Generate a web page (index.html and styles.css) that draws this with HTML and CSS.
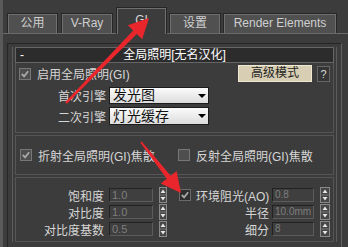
FILE: index.html
```html
<!DOCTYPE html>
<html>
<head>
<meta charset="utf-8">
<link rel="stylesheet" href="styles.css">
</head>
<body>
<div class="window">
  <div class="tabs">
    <div class="tab t1">公用</div>
    <div class="tab t2">V-Ray</div>
    <div class="tab t3 active">GI</div>
    <div class="tab t4">设置</div>
    <div class="tab t5">Render Elements</div>
  </div>
  <div class="page">
    <div class="scroll">
      <div class="rollout">
        <div class="rhead"><span class="minus">-</span><span class="title">全局照明[无名汉化]</span><span></span></div>
        <div class="group g1">
          <div class="row r1">
            <span class="cb on"><svg viewBox="0 0 11 11"><path d="M2 5.5 L4.5 8 L9 2.5"/></svg></span>
            <span class="cbl">启用全局照明(GI)</span>
            <span class="adv">高级模式</span>
            <span class="help">?</span>
          </div>
          <div class="row eng">
            <span class="elbl">首次引擎</span>
            <span class="select">发光图<i class="caret"></i></span>
          </div>
          <div class="row eng e2">
            <span class="elbl">二次引擎</span>
            <span class="select">灯光缓存<i class="caret"></i></span>
          </div>
        </div>
        <div class="group g2">
          <div class="half hl">
            <span class="cb on"><svg viewBox="0 0 11 11"><path d="M2 5.5 L4.5 8 L9 2.5"/></svg></span>
            <span class="cbl">折射全局照明(GI)焦散</span>
          </div>
          <div class="half hr">
            <span class="cb"></span>
            <span class="cbl">反射全局照明(GI)焦散</span>
          </div>
        </div>
        <div class="group g3">
          <div class="srow">
            <div class="half hl">
              <span class="slbl">饱和度</span>
              <span class="inp">1.0</span>
              <span class="spin"><svg viewBox="0 0 8 16"><rect x="0.5" y="0.5" width="7" height="15"/><path class="tri" d="M4 2.5 L6.5 6 L1.5 6Z M1.5 10 L6.5 10 L4 13.5Z"/><path class="mid" d="M1 8 H7"/></svg></span>
            </div>
            <div class="half hr">
              <span class="slbl2 ao"><span class="cb on dark"><svg viewBox="0 0 11 11"><path d="M2 5.5 L4.5 8 L9 2.5"/></svg></span><span class="cbl">环境阻光(AO)</span></span>
              <span class="inp w2">0.8</span>
              <span class="spin s2"><svg viewBox="0 0 10 16"><rect x="0.5" y="0.5" width="9" height="15"/><path class="tri" d="M5 2.5 L7.5 6 L2.5 6Z M2.5 10 L7.5 10 L5 13.5Z"/><path class="mid" d="M1 8 H9"/></svg></span>
            </div>
          </div>
          <div class="srow">
            <div class="half hl">
              <span class="slbl">对比度</span>
              <span class="inp">1.0</span>
              <span class="spin"><svg viewBox="0 0 8 16"><rect x="0.5" y="0.5" width="7" height="15"/><path class="tri" d="M4 2.5 L6.5 6 L1.5 6Z M1.5 10 L6.5 10 L4 13.5Z"/><path class="mid" d="M1 8 H7"/></svg></span>
            </div>
            <div class="half hr">
              <span class="slbl2">半径</span>
              <span class="inp w2">10.0mm</span>
              <span class="spin s2"><svg viewBox="0 0 10 16"><rect x="0.5" y="0.5" width="9" height="15"/><path class="tri" d="M5 2.5 L7.5 6 L2.5 6Z M2.5 10 L7.5 10 L5 13.5Z"/><path class="mid" d="M1 8 H9"/></svg></span>
            </div>
          </div>
          <div class="srow">
            <div class="half hl">
              <span class="slbl">对比度基数</span>
              <span class="inp">0.5</span>
              <span class="spin"><svg viewBox="0 0 8 16"><rect x="0.5" y="0.5" width="7" height="15"/><path class="tri" d="M4 2.5 L6.5 6 L1.5 6Z M1.5 10 L6.5 10 L4 13.5Z"/><path class="mid" d="M1 8 H7"/></svg></span>
            </div>
            <div class="half hr">
              <span class="slbl2">细分</span>
              <span class="inp w2">8</span>
              <span class="spin s2"><svg viewBox="0 0 10 16"><rect x="0.5" y="0.5" width="9" height="15"/><path class="tri" d="M5 2.5 L7.5 6 L2.5 6Z M2.5 10 L7.5 10 L5 13.5Z"/><path class="mid" d="M1 8 H9"/></svg></span>
            </div>
          </div>
        </div>
      </div>
    </div>
  </div>
</div>
<svg class="arrows" width="348" height="247" viewBox="0 0 348 247">
  <polygon points="65.1,102.2 133.2,30.6 127.8,25.3 149,18 142.2,39.3 136.8,34.0 66.9,103.8"/>
  <polygon points="140.3,142.6 166.7,178.8 160.8,183.5 181,193 176.6,171.1 170.7,175.8 141.7,141.4"/>
</svg>
</body>
</html>
```

FILE: styles.css
```css
* { box-sizing: border-box; }
html, body { margin: 0; padding: 0; }
body {
  width: 348px;
  height: 247px;
  overflow: hidden;
  background: #3c3c3c;
  font-family: "Liberation Sans", "Noto Sans CJK SC", sans-serif;
  font-size: 12px;
  color: #d6d6d6;
  position: relative;
}
.window {
  height: 247px;
  border-left: 3px solid #5a5a5a;
  display: flex;
  flex-direction: column;
}
.tabs {
  display: flex;
  align-items: flex-end;
  height: 33px;
  padding-left: 4px;
  flex: none;
}
.tab {
  height: 20px;
  border: 1px solid #262626;
  border-bottom: none;
  box-shadow: inset 1px 1px 0 #707070, inset -1px 0 0 #707070;
  background: #505050;
  color: #cfcfcf;
  text-align: center;
  line-height: 19px;
  font-size: 12px;
}
.t1 { width: 51px; }
.t2 { width: 52px; margin-left: 3px; }
.t3 { width: 51px; margin-left: 3px; }
.t4 { width: 52px; margin-left: 2px; }
.t5 { width: 114px; margin-left: 2px; }
.tab.active {
  height: 27px;
  background: #3c3c3c;
  position: relative;
  z-index: 1;
  margin-bottom: -1px;
  line-height: 24px;
  color: #d8d8d8;
}
.page {
  flex: 1;
  border-top: 1px solid #6a6a6a;
  padding: 9px 0 0 4px;
}
.scroll {
  height: 100%;
  width: 335px;
  border-left: 1px solid #262626;
  border-top: 1px solid #262626;
  border-right: 1px solid #626262;
  padding: 3px 0 0 4px;
}
.rollout {
  width: 325px;
  border-left: 1px solid #5c5c5c;
  border-right: 1px solid #5c5c5c;
}
.rhead {
  margin: 0 2px;
  height: 16px;
  background: #2c2c2c;
  border: 1px solid #666;
  display: grid;
  grid-template-columns: 1fr auto 1fr;
  align-items: center;
  color: #fff;
  font-size: 12px;
}
.minus { padding-left: 4px; line-height: 14px; }
.title { line-height: 14px; }
.group {
  margin: 0 2px;
  border: 1px solid #555;
}
.g1 {
  border-top: none;
  padding: 2px 3px 7px 3px;
}
.row { display: flex; align-items: center; }
.r1 { height: 17px; }
.cb {
  width: 12px;
  height: 12px;
  flex: none;
  border: 1px solid #777;
  background: #4e4e4e;
  display: flex;
  align-items: center;
  justify-content: center;
}
.cb svg { width: 10px; height: 10px; }
.cb svg path { fill: none; stroke: #a8a8a8; stroke-width: 2; }
.cb.dark { background: #2e2e2e; border-color: #6a6a6a; }
.cbl { margin-left: 6px; color: #d6d6d6; white-space: nowrap; }
.adv {
  margin-left: auto;
  width: 74px;
  height: 17px;
  background: #d8ceb3;
  border: 1px solid #efe7d2;
  color: #1e1e1e;
  text-align: center;
  line-height: 15px;
  font-size: 12px;
}
.help {
  margin-left: 5px;
  width: 13px;
  height: 16px;
  background: #353535;
  border: 1px solid #666;
  color: #ddd;
  text-align: center;
  line-height: 14px;
  font-size: 11px;
}
.eng { height: 17px; margin-top: 5px; }
.e2 { margin-top: 3px; height: 18px; }
.elbl { width: 87px; text-align: right; flex: none; }
.select {
  margin-left: 3px;
  width: 100px;
  height: 100%;
  background: linear-gradient(#fbfbfb, #dcdcdc);
  border: 1px solid #1c1c1c;
  color: #111;
  font-size: 14px;
  line-height: 15px;
  padding-left: 3px;
  display: flex;
  align-items: center;
}
.caret {
  margin-left: auto;
  margin-right: 2px;
  width: 0;
  height: 0;
  border-left: 4px solid transparent;
  border-right: 4px solid transparent;
  border-top: 4px solid #000;
}
.g2 {
  margin-top: 2px;
  height: 40px;
  display: flex;
  align-items: center;
  padding-left: 4px;
}
.half { display: flex; align-items: center; flex: none; }
.g2 .hl { width: 158px; }
.g3 {
  margin-top: 2px;
  padding: 9px 0 3px 0;
}
.srow { display: flex; height: 16px; margin-bottom: 1px; }
.g3 .hl { width: 163px; }
.slbl { width: 88px; text-align: right; white-space: nowrap; flex: none; }
.slbl2 { width: 90px; text-align: right; white-space: nowrap; flex: none; overflow: visible; }
.slbl2.ao { display: flex; align-items: center; text-align: left; }
.slbl2.ao .cbl { margin-left: 5px; }
.inp {
  margin-left: 5px;
  width: 44px;
  height: 14px;
  flex: none;
  overflow: hidden;
  white-space: nowrap;
  background: #3f3f3f;
  border: 1px solid;
  border-color: #222 #5c5c5c #5c5c5c #222;
  color: #7e7e7e;
  font-size: 11px;
  line-height: 12px;
  padding-left: 2px;
}
.inp.w2 { margin-left: 3px; width: 42px; font-size: 10px; }
.spin { margin-left: 6px; width: 8px; height: 16px; display: block; flex: none; }
.spin.s2 { width: 10px; }
.spin svg { display: block; width: 100%; height: 100%; }
.spin rect { fill: #474747; stroke: #8a8a8a; stroke-width: 1; }
.spin .tri { fill: #e6e6e6; }
.spin .mid { stroke: #777; stroke-width: 1; }
.arrows {
  position: absolute;
  left: 0;
  top: 0;
  pointer-events: none;
  z-index: 5;
}
.arrows polygon { fill: #e8262b; }
```
